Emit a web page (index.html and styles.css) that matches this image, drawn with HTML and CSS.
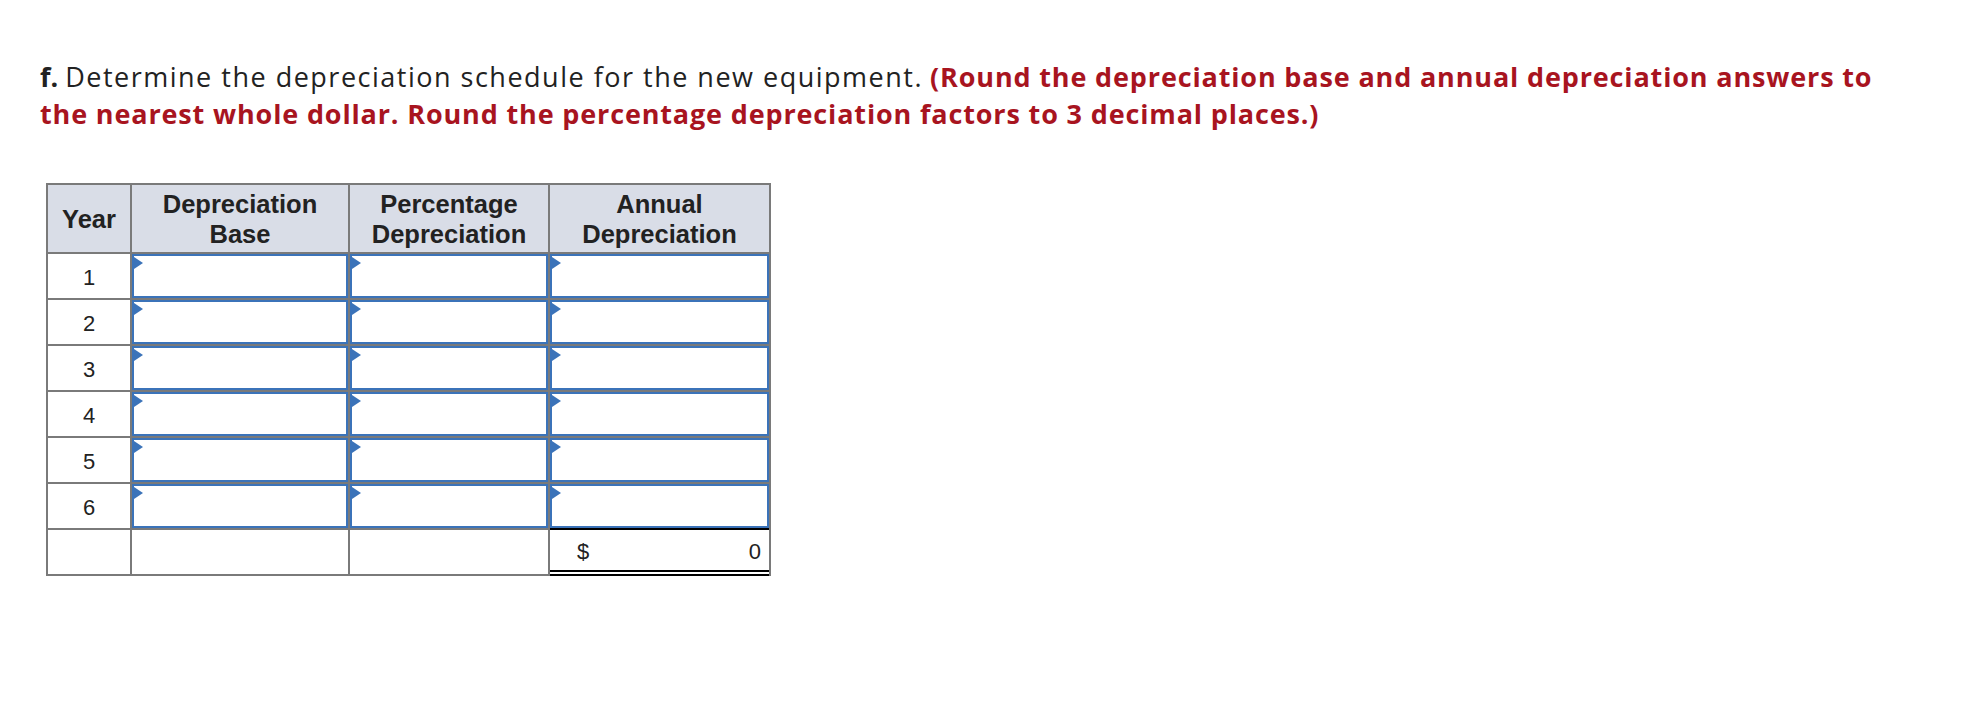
FILE: index.html
```html
<!DOCTYPE html>
<html>
<head>
<meta charset="utf-8">
<link rel="stylesheet" href="styles.css">
</head>
<body>
<div class="page">
  <p class="question"><b class="label">f.</b> <span class="plain">Determine the depreciation schedule for the new equipment.</span> <strong class="hint">(Round the depreciation base and annual depreciation answers to<br>the nearest whole dollar. Round the percentage depreciation factors to 3 decimal places.)</strong></p>

  <div class="sched">
    <div class="hd">Year</div>
    <div class="hd">Depreciation<br>Base</div>
    <div class="hd">Percentage<br>Depreciation</div>
    <div class="hd">Annual<br>Depreciation</div>

    <div class="yr">1</div><div class="inp"></div><div class="inp"></div><div class="inp"></div>
    <div class="yr">2</div><div class="inp"></div><div class="inp"></div><div class="inp"></div>
    <div class="yr">3</div><div class="inp"></div><div class="inp"></div><div class="inp"></div>
    <div class="yr">4</div><div class="inp"></div><div class="inp"></div><div class="inp"></div>
    <div class="yr">5</div><div class="inp"></div><div class="inp"></div><div class="inp"></div>
    <div class="yr">6</div><div class="inp"></div><div class="inp"></div><div class="inp"></div>

    <div class="blank"></div><div class="blank"></div><div class="blank"></div>
    <div class="total"><span>$</span><span>0</span></div>
  </div>
</div>
</body>
</html>
```

FILE: styles.css
```css
html, body {
  margin: 0;
  padding: 0;
  background: #ffffff;
}

.page {
  padding: 58px 0 0 40px;
}

.question {
  margin: 0;
  white-space: nowrap;
  font-family: "Open Sans", Lato, sans-serif;
  font-size: 27px;
  line-height: 37px;
  color: #222222;
}

.label {
  font-weight: 700;
}

.plain {
  letter-spacing: 1.5px;
}

.hint {
  font-weight: 700;
  color: #a8141f;
  letter-spacing: 0.85px;
}

.sched {
  margin: 51px 0 0 6px;
  display: grid;
  grid-template-columns: 82px 216px 198px 219px;
  grid-template-rows: 67px repeat(7, 44px);
  gap: 2px;
  padding: 2px;
  width: max-content;
  background: #7a7a7a;
  font-family: "Liberation Sans", Arial, sans-serif;
  color: #222222;
}

.hd {
  background: #d9dde7;
  font-weight: 700;
  font-size: 25.5px;
  line-height: 30px;
  display: flex;
  align-items: center;
  justify-content: center;
  text-align: center;
}

.yr {
  background: #ffffff;
  font-size: 22px;
  display: flex;
  align-items: center;
  justify-content: center;
  padding-top: 3px;
  box-sizing: border-box;
}

.inp {
  position: relative;
  background: #ffffff;
  border: 2px solid #3b73b9;
}

.inp::before {
  content: "";
  position: absolute;
  left: 0;
  top: 1px;
  width: 0;
  height: 0;
  border-left: 9px solid #3b73b9;
  border-top: 6px solid transparent;
  border-bottom: 6px solid transparent;
}

.blank {
  background: #ffffff;
}

.total {
  background: linear-gradient(to top, #ffffff 0 2px, #000000 2px 4px, #ffffff 4px);
  box-shadow: 0 -2px 0 #000000, 0 2px 0 #000000;
  display: flex;
  justify-content: space-between;
  align-items: center;
  padding: 0 8px 0 27px;
  font-size: 22px;
}
```
